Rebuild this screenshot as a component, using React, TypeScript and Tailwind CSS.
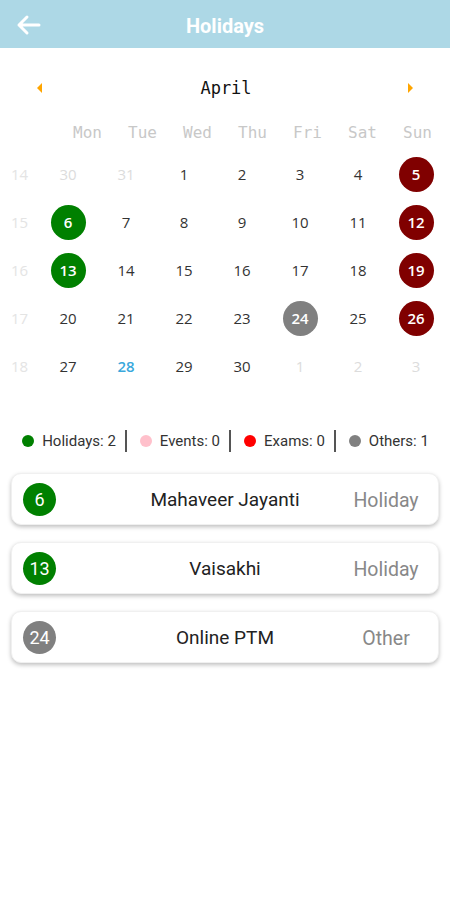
import React from "react";

type Cell = { d: number | string; kind: "in" | "out" | "today"; bg?: string };

const weeks: { wk: number; days: Cell[] }[] = [
  {
    wk: 14,
    days: [
      { d: 30, kind: "out" },
      { d: 31, kind: "out" },
      { d: 1, kind: "in" },
      { d: 2, kind: "in" },
      { d: 3, kind: "in" },
      { d: 4, kind: "in" },
      { d: 5, kind: "in", bg: "bg-[#800000]" },
    ],
  },
  {
    wk: 15,
    days: [
      { d: 6, kind: "in", bg: "bg-[#008000]" },
      { d: 7, kind: "in" },
      { d: 8, kind: "in" },
      { d: 9, kind: "in" },
      { d: 10, kind: "in" },
      { d: 11, kind: "in" },
      { d: 12, kind: "in", bg: "bg-[#800000]" },
    ],
  },
  {
    wk: 16,
    days: [
      { d: 13, kind: "in", bg: "bg-[#008000]" },
      { d: 14, kind: "in" },
      { d: 15, kind: "in" },
      { d: 16, kind: "in" },
      { d: 17, kind: "in" },
      { d: 18, kind: "in" },
      { d: 19, kind: "in", bg: "bg-[#800000]" },
    ],
  },
  {
    wk: 17,
    days: [
      { d: 20, kind: "in" },
      { d: 21, kind: "in" },
      { d: 22, kind: "in" },
      { d: 23, kind: "in" },
      { d: 24, kind: "in", bg: "bg-[#808080]" },
      { d: 25, kind: "in" },
      { d: 26, kind: "in", bg: "bg-[#800000]" },
    ],
  },
  {
    wk: 18,
    days: [
      { d: 27, kind: "in" },
      { d: 28, kind: "today" },
      { d: 29, kind: "in" },
      { d: 30, kind: "in" },
      { d: 1, kind: "out" },
      { d: 2, kind: "out" },
      { d: 3, kind: "out" },
    ],
  },
];

const dayNames = ["Mon", "Tue", "Wed", "Thu", "Fri", "Sat", "Sun"];

const events = [
  { d: 6, title: "Mahaveer Jayanti", type: "Holiday", bg: "bg-[#008000]" },
  { d: 13, title: "Vaisakhi", type: "Holiday", bg: "bg-[#008000]" },
  { d: 24, title: "Online PTM", type: "Other", bg: "bg-[#808080]" },
];

const legend = [
  { color: "bg-[#008000]", label: "Holidays: 2" },
  { color: "bg-[#ffc0cb]", label: "Events: 0" },
  { color: "bg-[#ff0000]", label: "Exams: 0" },
  { color: "bg-[#808080]", label: "Others: 1" },
];

const mono = "font-['DejaVu_Sans_Mono','Liberation_Mono',monospace]";
const sans = "font-['Open_Sans','Noto_Sans',sans-serif]";
const roboto = "font-['Roboto','Liberation_Sans',sans-serif]";

export default function App() {
  return (
    <div className={`w-[450px] h-[900px] bg-white ${roboto}`}>
      {/* Header */}
      <div className="h-[48px] bg-[#add8e6] flex items-center relative">
        <div className="absolute left-[15px] top-[13px]">
          <svg width="26" height="24" viewBox="0 0 26 24" fill="none">
            <path d="M24 12H4M12 4L4 12L12 20" stroke="white" strokeWidth="3" strokeLinecap="round" strokeLinejoin="round" />
          </svg>
        </div>
        <div className="flex-1 text-center text-white font-bold text-[20px] pt-[3px]">Holidays</div>
      </div>

      {/* Month header */}
      <div className="flex items-center justify-between h-[40px] mt-[20px] px-[35px]">
        <svg width="8" height="12" viewBox="0 0 8 12">
          <path d="M7 1L2 6L7 11Z" fill="#ffa500" />
        </svg>
        <div className={`${mono} text-[17px] text-[#111] pl-[2px] pt-[2px]`}>April</div>
        <svg width="8" height="12" viewBox="0 0 8 12">
          <path d="M1 1L6 6L1 11Z" fill="#ffa500" />
        </svg>
      </div>

      {/* Day names */}
      <div className={`grid grid-cols-[repeat(7,55px)] pl-[60px] h-[30px] mt-[10px] items-center ${mono} text-[16px] text-[#c8c8c8]`}>
        {dayNames.map((n) => (
          <div key={n} className="text-center">{n}</div>
        ))}
      </div>

      {/* Weeks */}
      <div className={`mt-[2px] ${sans}`}>
        {weeks.map((w) => (
          <div key={w.wk} className="grid grid-cols-[39px_repeat(7,58px)] h-[48px] items-center">
            <div className="text-center text-[15px] text-[#e4e4e4]">{w.wk}</div>
            {w.days.map((c, i) => (
              <div key={i} className="flex items-center justify-center">
                {c.bg ? (
                  <div className={`w-[35px] h-[35px] rounded-full ${c.bg} text-white flex items-center justify-center text-[15px] font-semibold`}>
                    {c.d}
                  </div>
                ) : (
                  <div
                    className={`text-[15px] ${
                      c.kind === "out"
                        ? "text-[#dcdcdc]"
                        : c.kind === "today"
                        ? "text-[#3aa8dc] font-semibold"
                        : "text-[#333]"
                    }`}
                  >
                    {c.d}
                  </div>
                )}
              </div>
            ))}
          </div>
        ))}
      </div>

      {/* Legend */}
      <div className="flex items-center justify-center mt-[37px] h-[28px] text-[15px] text-[#333] pl-[1px]">
        {legend.map((l, i) => (
          <React.Fragment key={l.label}>
            {i > 0 && <div className="w-[2px] h-[22px] bg-[#555] ml-[9px] mr-[13px]" />}
            <div className="flex items-center gap-[8px]">
              <div className={`w-[12px] h-[12px] rounded-full ${l.color}`} />
              <span>{l.label}</span>
            </div>
          </React.Fragment>
        ))}
      </div>

      {/* Events */}
      <div className="flex flex-col gap-[17px] px-[11px] mt-[18px]">
        {events.map((e) => (
          <div
            key={e.d}
            className="h-[52px] rounded-[10px] bg-white shadow-[0_2px_4px_rgba(0,0,0,0.25)] border border-[#f0f0f0] grid grid-cols-[1fr_auto_1fr] items-center"
          >
            <div className="pl-[11px]">
              <div className={`w-[33px] h-[33px] rounded-full ${e.bg} text-white flex items-center justify-center text-[18px]`}>
                {e.d}
              </div>
            </div>
            <div className="text-[19px] text-[#222] text-center pt-[3px]">{e.title}</div>
            <div className="flex justify-end pr-[12px]">
              <div className="w-[80px] text-center text-[19.5px] text-[#888] pt-[3px]">{e.type}</div>
            </div>
          </div>
        ))}
      </div>
    </div>
  );
}
